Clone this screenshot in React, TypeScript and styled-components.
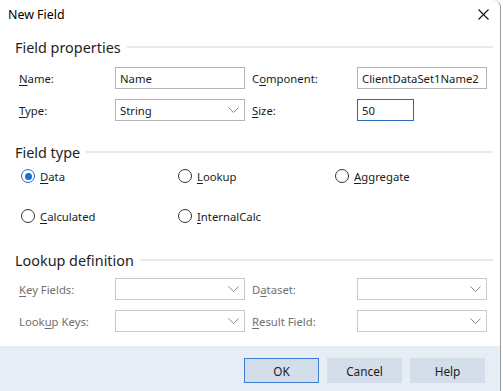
import React from "react";
import styled, { createGlobalStyle, css } from "styled-components";

const Global = createGlobalStyle`
  html, body { margin: 0; padding: 0; background: #ffffff; }
  body { font-family: "Noto Sans", "Open Sans", sans-serif; font-size: 11.3px; color: #1b1b1b; }
  * { box-sizing: border-box; }
`;

const Window = styled.div`
  width: 501px;
  height: 391px;
  display: flex;
  flex-direction: column;
  background: #ffffff;
  border-right: 1px solid #9c9c9c;
  border-top-right-radius: 7px;
  overflow: hidden;
`;

const TitleBar = styled.div`
  height: 28px;
  display: flex;
  align-items: center;
  justify-content: space-between;
  padding: 0 8px 0 8px;
  font-size: 12.4px;
  color: #000;
`;

const CloseBtn = styled.div`
  width: 14px;
  height: 14px;
  margin-right: 2px;
  display: flex;
  align-items: center;
  justify-content: center;
`;

const Content = styled.div`
  padding: 0 7px 0 15px;
  display: flex;
  flex-direction: column;
`;

const Heading = styled.div<{ $top: number }>`
  margin-top: ${(p) => p.$top}px;
  height: 20px;
  display: flex;
  align-items: center;
  gap: 6px;
  font-size: 14.4px;
  color: #1e1e1e;
  span { white-space: nowrap; }
  &::after {
    content: "";
    flex: 1;
    height: 2px;
    background: #e9e9e9;
  }
`;

const FormGrid = styled.div<{ $top: number }>`
  margin-top: ${(p) => p.$top}px;
  padding-left: 4px;
  display: grid;
  grid-template-columns: 96px 130px 112px 130px;
  grid-auto-rows: 22px;
  row-gap: 10px;
  align-items: center;
`;

const Label = styled.div<{ $disabled?: boolean; $left?: boolean }>`
  color: ${(p) => (p.$disabled ? "#707070" : "#1b1b1b")};
  padding-left: ${(p) => (p.$left ? "0" : "7px")};
  white-space: nowrap;
  u { text-decoration: underline; text-underline-offset: 2px; }
`;

const boxBase = css`
  height: 22px;
  border: 1px solid #b4b4b4;
  background: #fff;
  display: flex;
  align-items: center;
  padding: 0 4px;
  color: #1b1b1b;
  white-space: nowrap;
  overflow: hidden;
`;

const TextBox = styled.div<{ $focused?: boolean; $width?: number }>`
  ${boxBase};
  width: ${(p) => (p.$width ? `${p.$width}px` : "130px")};
  border-color: ${(p) => (p.$focused ? "#2c6ab8" : "#b4b4b4")};
`;

const Select = styled.div<{ $disabled?: boolean }>`
  ${boxBase};
  width: 130px;
  justify-content: space-between;
  padding-right: 5px;
  border-color: ${(p) => (p.$disabled ? "#c9c9c9" : "#b4b4b4")};
`;

const Chevron = () => (
  <svg width="11" height="6" viewBox="0 0 11 6">
    <path d="M0.5 0.5 L5.5 5.5 L10.5 0.5" fill="none" stroke="#8a8a8a" strokeWidth="1" />
  </svg>
);

const RadioGrid = styled.div<{ $top: number }>`
  margin-top: ${(p) => p.$top}px;
  padding-left: 6px;
  display: grid;
  grid-template-columns: 157px 157px 157px;
  grid-auto-rows: 20px;
  row-gap: 20px;
  align-items: center;
`;

const RadioItem = styled.div`
  display: flex;
  align-items: center;
  gap: 5px;
  u { text-decoration: underline; text-underline-offset: 2px; }
`;

const Circle = styled.div<{ $checked?: boolean }>`
  width: 14px;
  height: 14px;
  border-radius: 50%;
  border: 1px solid ${(p) => (p.$checked ? "#1a6fd0" : "#333333")};
  display: flex;
  align-items: center;
  justify-content: center;
  &::after {
    content: "";
    width: 7px;
    height: 7px;
    border-radius: 50%;
    background: ${(p) => (p.$checked ? "#1a6fd0" : "transparent")};
  }
`;

const Footer = styled.div`
  margin-top: auto;
  height: 45px;
  background: #e6edf5;
  display: flex;
  justify-content: flex-end;
  align-items: flex-start;
  padding: 12px 15px 0 0;
  gap: 8px;
`;

const Button = styled.div<{ $default?: boolean }>`
  width: 75px;
  height: 25px;
  display: flex;
  align-items: center;
  justify-content: center;
  background: #d3deea;
  border: 1px solid ${(p) => (p.$default ? "#3c7fd4" : "#d3deea")};
  color: #1b1b1b;
  font-size: 11.8px;
`;

const Radio = ({ checked, children }: { checked?: boolean; children: React.ReactNode }) => (
  <RadioItem>
    <Circle $checked={checked} />
    <span>{children}</span>
  </RadioItem>
);

export default function App() {
  return (
    <>
      <Global />
      <Window>
        <TitleBar>
          <span>New Field</span>
          <CloseBtn>
            <svg width="11" height="11" viewBox="0 0 11 11">
              <path d="M0.5 0.5 L10.5 10.5 M10.5 0.5 L0.5 10.5" stroke="#111" strokeWidth="1.1" />
            </svg>
          </CloseBtn>
        </TitleBar>
        <Content>
          <Heading $top={9}>
            <span>Field properties</span>
          </Heading>
          <FormGrid $top={10}>
            <Label $left><u>N</u>ame:</Label>
            <TextBox>Name</TextBox>
            <Label>C<u>o</u>mponent:</Label>
            <TextBox>ClientDataSet1Name2</TextBox>
            <Label $left><u>T</u>ype:</Label>
            <Select>
              <span>String</span>
              <Chevron />
            </Select>
            <Label><u>S</u>ize:</Label>
            <TextBox $focused $width={57}>50</TextBox>
          </FormGrid>
          <Heading $top={21}>
            <span>Field type</span>
          </Heading>
          <RadioGrid $top={4}>
            <Radio checked><u>D</u>ata</Radio>
            <Radio><u>L</u>ookup</Radio>
            <Radio><u>A</u>ggregate</Radio>
            <Radio><u>C</u>alculated</Radio>
            <Radio><u>I</u>nternalCalc</Radio>
          </RadioGrid>
          <Heading $top={24}>
            <span>Lookup definition</span>
          </Heading>
          <FormGrid $top={8}>
            <Label $left $disabled><u>K</u>ey Fields:</Label>
            <Select $disabled>
              <span />
              <Chevron />
            </Select>
            <Label $disabled>D<u>a</u>taset:</Label>
            <Select $disabled>
              <span />
              <Chevron />
            </Select>
            <Label $left $disabled>Look<u>u</u>p Keys:</Label>
            <Select $disabled>
              <span />
              <Chevron />
            </Select>
            <Label $disabled><u>R</u>esult Field:</Label>
            <Select $disabled>
              <span />
              <Chevron />
            </Select>
          </FormGrid>
        </Content>
        <Footer>
          <Button $default>OK</Button>
          <Button>Cancel</Button>
          <Button>Help</Button>
        </Footer>
      </Window>
    </>
  );
}
